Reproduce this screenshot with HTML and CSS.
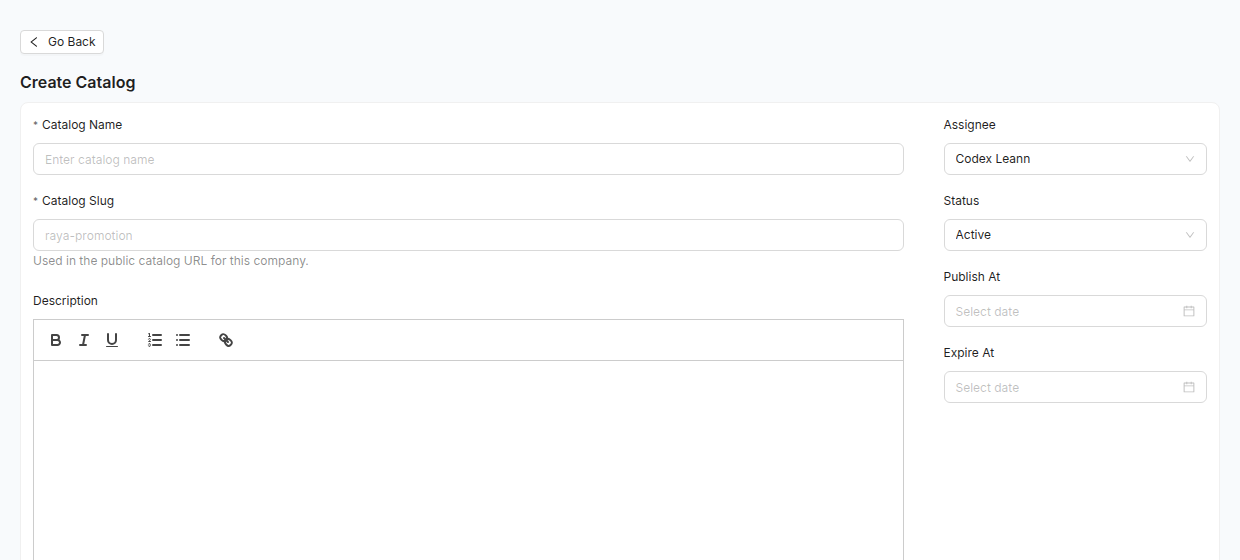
FILE: index.html
```html
<!DOCTYPE html>
<html lang="en">
<head>
<meta charset="utf-8">
<meta name="viewport" content="width=device-width, initial-scale=1">
<title>Create Catalog</title>
<link rel="stylesheet" href="styles.css">
</head>
<body>
<main class="page">
  <button type="button" class="back">
    <svg class="icon-back" viewBox="64 64 896 896" aria-hidden="true"><path d="M724 218.3V141c0-6.7-7.7-10.4-12.9-6.3L260.3 486.8a31.86 31.86 0 000 50.3l450.8 352.1c5.3 4.1 12.9.4 12.9-6.3v-77.3c0-4.9-2.3-9.6-6.1-12.6l-360-281 360-281.1c3.8-3 6.1-7.7 6.1-12.6z"/></svg>
    <span>Go Back</span>
  </button>
  <h1 class="title">Create Catalog</h1>

  <form class="card">
    <div class="row">
      <div class="col col-main">
        <div class="field">
          <label class="label" for="name"><span class="required">*</span>Catalog Name</label>
          <input class="control" id="name" type="text" placeholder="Enter catalog name">
        </div>
        <div class="field field-help">
          <label class="label" for="slug"><span class="required">*</span>Catalog Slug</label>
          <input class="control" id="slug" type="text" placeholder="raya-promotion" aria-describedby="slug-help">
          <p class="help" id="slug-help">Used in the public catalog URL for this company.</p>
        </div>
        <div class="field">
          <label class="label" for="description">Description</label>
          <div class="toolbar" role="toolbar" aria-label="Formatting">
            <div class="tools">
              <button type="button" class="tool" aria-label="Bold"><svg viewBox="0 0 18 18"><path class="stroke" d="M5,4H9.5A2.5,2.5,0,0,1,12,6.5v0A2.5,2.5,0,0,1,9.5,9H5A0,0,0,0,1,5,9V4A0,0,0,0,1,5,4Z"/><path class="stroke" d="M5,9h5.5A2.5,2.5,0,0,1,13,11.5v0A2.5,2.5,0,0,1,10.5,14H5a0,0,0,0,1,0,0V9A0,0,0,0,1,5,9Z"/></svg></button>
              <button type="button" class="tool" aria-label="Italic"><svg viewBox="0 0 18 18"><path class="stroke" d="M7 4H13M5 14H11M8 14L10 4"/></svg></button>
              <button type="button" class="tool" aria-label="Underline"><svg viewBox="0 0 18 18"><path class="stroke" d="M5,3V9a4.012,4.012,0,0,0,4,4H9a4.012,4.012,0,0,0,4-4V3"/><rect class="fill" height="1" rx="0.5" ry="0.5" width="12" x="3" y="15"/></svg></button>
            </div>
            <div class="tools">
              <button type="button" class="tool" aria-label="Numbered list"><svg viewBox="0 0 18 18"><path class="stroke" d="M7 4H15M7 9H15M7 14H15"/><path class="stroke thin" d="M2.5 5.5H4.5"/><path class="fill" d="M3.5,6A0.5,0.5,0,0,1,3,5.5V3.085l-0.276.138A0.5,0.5,0,0,1,2.053,3c-0.124-.247-0.023-0.324.224-0.447l1-.5A0.5,0.5,0,0,1,4,2.5v3A0.5,0.5,0,0,1,3.5,6Z"/><path class="stroke thin" d="M4.5,10.5h-2c0-.234,1.85-1.076,1.85-2.234A0.959,0.959,0,0,0,2.5,8.156"/><path class="stroke thin" d="M2.5,14.846a0.959,0.959,0,0,0,1.85-.109A0.7,0.7,0,0,0,3.75,14a0.688,0.688,0,0,0,.6-0.736,0.959,0.959,0,0,0-1.85-.109"/></svg></button>
              <button type="button" class="tool" aria-label="Bulleted list"><svg viewBox="0 0 18 18"><path class="stroke" d="M6 4H15M6 9H15M6 14H15M3 4H3M3 9H3M3 14H3"/></svg></button>
            </div>
            <div class="tools">
              <button type="button" class="tool" aria-label="Link"><svg viewBox="0 0 18 18"><path class="stroke" d="M7 7L11 11"/><path class="stroke" d="M8.9,4.577a3.476,3.476,0,0,1,.36,4.679A3.476,3.476,0,0,1,4.577,8.9C3.185,7.5,2.035,6.4,4.217,4.217S7.5,3.185,8.9,4.577Z"/><path class="stroke" d="M13.423,9.1a3.476,3.476,0,0,0-4.679-.36,3.476,3.476,0,0,0,.36,4.679c1.392,1.392,2.5,2.542,4.679.36S14.815,10.5,13.423,9.1Z"/></svg></button>
            </div>
          </div>
          <textarea class="editor" id="description"></textarea>
        </div>
      </div>

      <div class="col col-side">
        <div class="field">
          <label class="label" for="assignee">Assignee</label>
          <div class="picker">
            <select class="control" id="assignee"><option>Codex Leann</option></select>
            <svg class="suffix arrow" viewBox="64 64 896 896" aria-hidden="true"><path d="M884 256h-75c-5.1 0-9.9 2.5-12.9 6.6L512 654.2 227.9 262.6c-3-4.1-7.8-6.6-12.9-6.6h-75c-6.5 0-10.3 7.4-6.5 12.7l352.6 486.1c12.8 17.6 39 17.6 51.7 0l352.6-486.1c3.9-5.3.1-12.7-6.4-12.7z"/></svg>
          </div>
        </div>
        <div class="field">
          <label class="label" for="status">Status</label>
          <div class="picker">
            <select class="control" id="status"><option>Active</option></select>
            <svg class="suffix arrow" viewBox="64 64 896 896" aria-hidden="true"><path d="M884 256h-75c-5.1 0-9.9 2.5-12.9 6.6L512 654.2 227.9 262.6c-3-4.1-7.8-6.6-12.9-6.6h-75c-6.5 0-10.3 7.4-6.5 12.7l352.6 486.1c12.8 17.6 39 17.6 51.7 0l352.6-486.1c3.9-5.3.1-12.7-6.4-12.7z"/></svg>
          </div>
        </div>
        <div class="field">
          <label class="label" for="publish">Publish At</label>
          <div class="picker">
            <input class="control" id="publish" type="text" placeholder="Select date">
            <svg class="suffix calendar" viewBox="64 64 896 896" aria-hidden="true"><path d="M880 184H712v-64c0-4.4-3.6-8-8-8h-56c-4.4 0-8 3.6-8 8v64H384v-64c0-4.4-3.6-8-8-8h-56c-4.4 0-8 3.6-8 8v64H144c-17.7 0-32 14.3-32 32v664c0 17.7 14.3 32 32 32h736c17.7 0 32-14.3 32-32V216c0-17.7-14.3-32-32-32zm-40 656H184V460h656v380zM184 392V256h128v48c0 4.4 3.6 8 8 8h56c4.4 0 8-3.6 8-8v-48h256v48c0 4.4 3.6 8 8 8h56c4.4 0 8-3.6 8-8v-48h128v136H184z"/></svg>
          </div>
        </div>
        <div class="field">
          <label class="label" for="expire">Expire At</label>
          <div class="picker">
            <input class="control" id="expire" type="text" placeholder="Select date">
            <svg class="suffix calendar" viewBox="64 64 896 896" aria-hidden="true"><path d="M880 184H712v-64c0-4.4-3.6-8-8-8h-56c-4.4 0-8 3.6-8 8v64H384v-64c0-4.4-3.6-8-8-8h-56c-4.4 0-8 3.6-8 8v64H144c-17.7 0-32 14.3-32 32v664c0 17.7 14.3 32 32 32h736c17.7 0 32-14.3 32-32V216c0-17.7-14.3-32-32-32zm-40 656H184V460h656v380zM184 392V256h128v48c0 4.4 3.6 8 8 8h56c4.4 0 8-3.6 8-8v-48h256v48c0 4.4 3.6 8 8 8h56c4.4 0 8-3.6 8-8v-48h128v136H184z"/></svg>
          </div>
        </div>
      </div>
    </div>
  </form>
</main>
</body>
</html>
```

FILE: styles.css
```css
*,
*::before,
*::after {
  box-sizing: border-box;
}

html {
  scrollbar-width: none;
}

body {
  margin: 0;
  background: #f8fafc;
  color: rgba(0, 0, 0, 0.88);
  font-family: Inter, "Liberation Sans", sans-serif;
  font-size: 12px;
  line-height: 20px;
}

button,
input,
select,
textarea {
  font: inherit;
  color: inherit;
}

.page {
  padding: 30px 20px;
}

.back {
  display: flex;
  align-items: center;
  gap: 8px;
  height: 24px;
  padding: 0 7px;
  border: 1px solid #d9d9d9;
  border-radius: 4px;
  background: #fff;
  box-shadow: 0 2px 0 rgba(0, 0, 0, 0.02);
}

.icon-back {
  width: 12px;
  height: 12px;
  fill: currentColor;
}

.title {
  margin: 16px 0 8px;
  font-size: 16px;
  line-height: 24px;
  font-weight: 600;
}

.card {
  padding: 12px;
  border: 1px solid #f0f0f0;
  border-radius: 8px;
  background: #fff;
}

.row {
  display: flex;
  margin: 0 -20px;
}

.col {
  padding: 0 20px;
  min-width: 0;
}

.col-main {
  flex: 0 0 75%;
}

.col-side {
  flex: 0 0 25%;
}

.field {
  display: flex;
  flex-direction: column;
  margin-bottom: 16px;
}

.field-help {
  margin-bottom: 20px;
}

.label {
  display: flex;
  gap: 4px;
  margin-bottom: 8px;
}

.required {
  color: rgba(0, 0, 0, 0.65);
  font-size: 10px;
}

.control {
  width: 100%;
  height: 32px;
  padding: 0 11px;
  border: 1px solid #d9d9d9;
  border-radius: 6px;
  background: #fff;
  appearance: none;
}

.control::placeholder {
  color: rgba(0, 0, 0, 0.25);
  opacity: 1;
}

.help {
  margin: 0;
  color: rgba(0, 0, 0, 0.45);
}

.picker {
  position: relative;
}

.suffix {
  position: absolute;
  top: 0;
  bottom: 0;
  right: 12px;
  margin: auto 0;
  fill: rgba(0, 0, 0, 0.25);
  pointer-events: none;
}

.arrow {
  width: 10px;
  height: 10px;
}

.calendar {
  width: 12px;
  height: 12px;
}

.toolbar {
  display: flex;
  gap: 15px;
  padding: 8px;
  border: 1px solid #ccc;
}

.tools {
  display: flex;
}

.tool {
  display: flex;
  width: 28px;
  height: 24px;
  padding: 3px 5px;
  border: 0;
  background: none;
}

.tool svg {
  width: 18px;
  height: 18px;
}

.stroke {
  fill: none;
  stroke: #444;
  stroke-width: 2;
  stroke-linecap: round;
  stroke-linejoin: round;
}

.thin {
  stroke-width: 1;
}

.fill {
  fill: #444;
}

.editor {
  display: block;
  width: 100%;
  min-height: 300px;
  padding: 12px 15px;
  border: 1px solid #ccc;
  border-top: 0;
  background: #fff;
  resize: none;
}
```
